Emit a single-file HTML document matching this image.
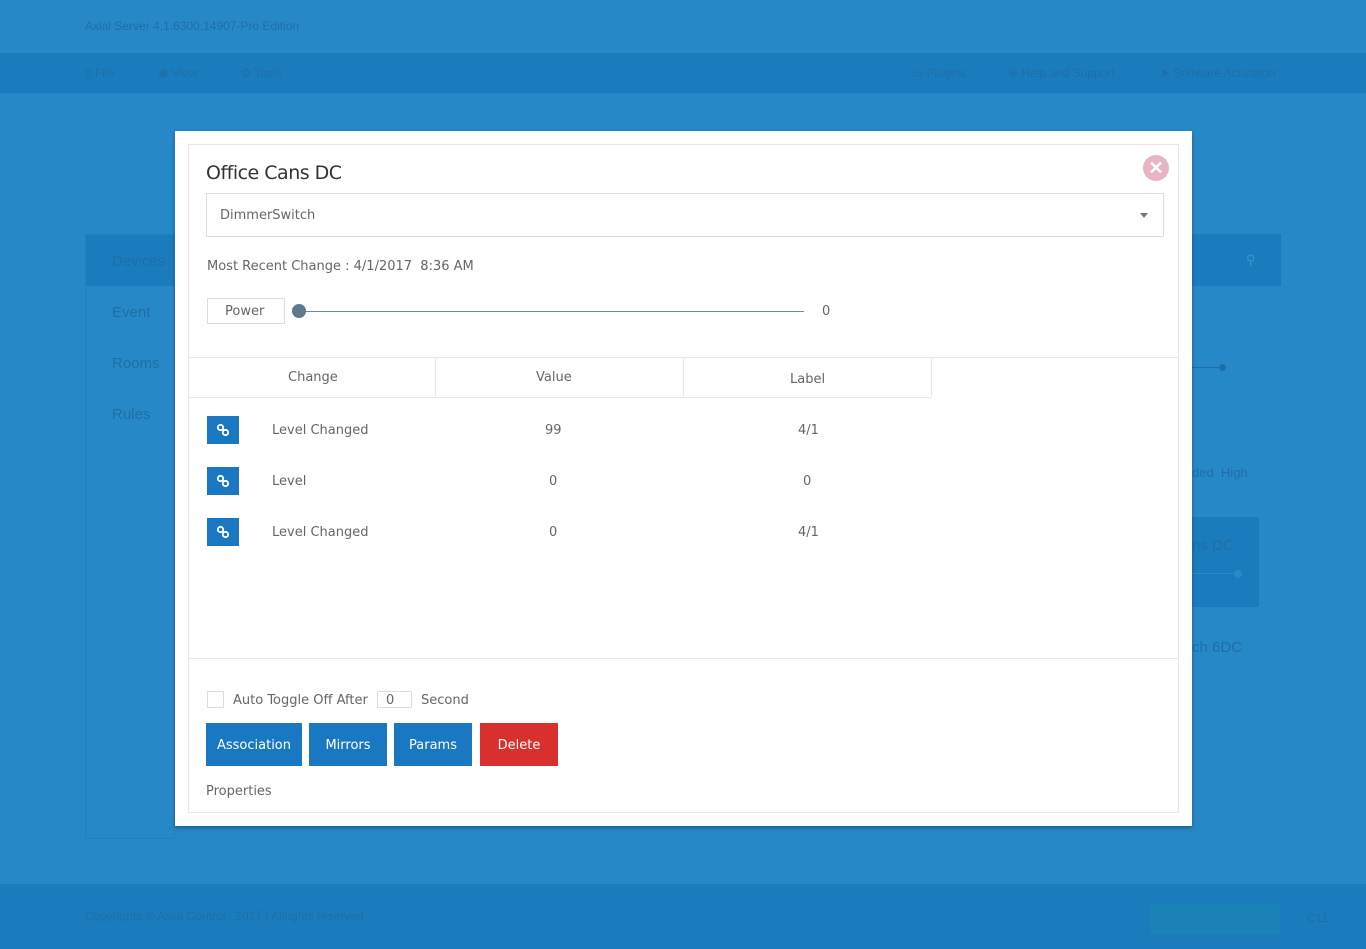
<!DOCTYPE html>
<html><head><meta charset="utf-8"><style>
*{box-sizing:border-box;margin:0;padding:0}
body{width:1366px;height:949px;overflow:hidden;background:#2788c7;font-family:"Liberation Sans",sans-serif;position:relative}
.a{position:absolute}
.dim{color:#1f6fa6;font-size:12px}
.t{color:#666;font-size:13px;font-family:"DejaVu Sans","Liberation Sans",sans-serif}
.btn{position:absolute;top:723px;height:43px;color:#fff;font-size:13px;display:flex;align-items:center;justify-content:center;font-family:"DejaVu Sans",sans-serif;padding-top:2px}
.lnk{position:absolute;left:207px;width:32px;height:28px;background:#1a78c2}
.lnk svg{position:absolute;left:9px;top:7px}
</style></head><body>
<div class="a dim" style="left:85px;top:19px">Axial Server 4.1.6300.14907-Pro Edition</div>
<div class="a" style="left:0;top:53px;width:1366px;height:40px;background:#1a7cbc"></div>
<div class="a dim" style="left:85px;top:66px">▯ File</div>
<div class="a dim" style="left:158px;top:66px">◉ View</div>
<div class="a dim" style="left:240px;top:66px">⚙ Tools</div>
<div class="a dim" style="left:912px;top:66px">▭ Plugins</div>
<div class="a dim" style="left:1008px;top:66px">⊕ Help and Support</div>
<div class="a dim" style="left:1160px;top:66px">➤ Software Activation</div>
<div class="a" style="left:85px;top:234px;width:1196px;height:52px;background:#1a7cbc"></div>
<div class="a" style="left:1246px;top:252px;color:#3a94cc;font-size:13px">⚲</div>
<div class="a" style="left:85px;top:234px;width:90px;height:605px;border:1px solid #2380bf"></div>
<div class="a" style="left:112px;top:253px;color:#1f6fa6;font-size:15px">Devices</div>
<div class="a" style="left:112px;top:304px;color:#1f6fa6;font-size:15px">Event</div>
<div class="a" style="left:112px;top:355px;color:#1f6fa6;font-size:15px">Rooms</div>
<div class="a" style="left:112px;top:406px;color:#1f6fa6;font-size:15px">Rules</div>
<div class="a" style="left:1192px;top:367px;width:30px;height:1px;background:#1f6fa6"></div>
<div class="a" style="left:1219px;top:364px;width:7px;height:7px;border-radius:50%;background:#1f6fa6"></div>
<div class="a" style="left:1192px;top:517px;width:67px;height:90px;background:#1a7cbc"></div>
<div class="a" style="left:1192px;top:573px;width:45px;height:1px;background:#2a8ac8"></div>
<div class="a" style="left:1234px;top:570px;width:8px;height:8px;border-radius:50%;background:#2a8ac8"></div>
<div class="a" style="left:1192px;top:537px;color:#1f6fa6;font-size:15px">ns DC</div>
<div class="a" style="left:1192px;top:639px;color:#1f6fa6;font-size:15px">ch 6DC</div>
<div class="a" style="left:1192px;top:465px;color:#1f6fa6;font-size:13px">ded &nbsp;High</div>
<div class="a" style="left:0;top:884px;width:1366px;height:65px;background:#1a7cbc"></div>
<div class="a dim" style="left:85px;top:909px">Copyrights © Axial Control . 2017 | Allrights reserved</div>
<div class="a" style="left:1150px;top:904px;width:130px;height:30px;background:#1b82b8"></div>
<div class="a dim" style="left:1307px;top:911px">C11</div>

<div class="a" style="left:175px;top:131px;width:1017px;height:695px;background:#fff;box-shadow:0 2px 4px rgba(0,0,0,.3)"></div>
<div class="a" style="left:188px;top:144px;width:991px;height:669px;border:1px solid #e8e8e8"></div>
<div class="a" style="left:206px;top:162px;font-size:19px;color:#333;font-family:'DejaVu Sans',sans-serif;letter-spacing:-.5px">Office Cans DC</div>
<div class="a" style="left:1143px;top:155px;width:26px;height:26px;border-radius:50%;background:#e9b5c3;color:#fff;font-size:18px;font-weight:bold;text-align:center;line-height:26px">✕</div>
<div class="a" style="left:206px;top:193px;width:958px;height:44px;border:1px solid #ddd"></div>
<div class="a t" style="left:220px;top:208px">DimmerSwitch</div>
<div class="a" style="left:1140px;top:213px;border:4px solid transparent;border-top:5px solid #777"></div>
<div class="a t" style="left:207px;top:259px">Most Recent Change : 4/1/2017 &nbsp;8:36 AM</div>
<div class="a" style="left:207px;top:298px;width:78px;height:26px;border:1px solid #ddd"></div>
<div class="a t" style="left:225px;top:304px">Power</div>
<div class="a" style="left:299px;top:311px;width:505px;height:1px;background:#6a8aa0"></div>
<div class="a" style="left:292px;top:304px;width:14px;height:14px;border-radius:50%;background:#5e7a8e"></div>
<div class="a t" style="left:822px;top:304px">0</div>
<div class="a" style="left:188px;top:357px;width:991px;height:1px;background:#e8e8e8"></div>
<div class="a" style="left:188px;top:397px;width:743px;height:1px;background:#e8e8e8"></div>
<div class="a" style="left:435px;top:357px;width:1px;height:40px;background:#e8e8e8"></div>
<div class="a" style="left:683px;top:357px;width:1px;height:40px;background:#e8e8e8"></div>
<div class="a" style="left:931px;top:357px;width:1px;height:40px;background:#e8e8e8"></div>
<div class="a t" style="left:288px;top:370px">Change</div>
<div class="a t" style="left:536px;top:370px">Value</div>
<div class="a t" style="left:790px;top:372px">Label</div>
<div class="lnk" style="top:416px"><svg width="14" height="14" viewBox="0 0 14 14" fill="none" stroke="#fff" stroke-width="1.8"><circle cx="4.5" cy="4.5" r="2.7"/><circle cx="9.5" cy="9.5" r="2.7"/><path d="M6.3 6.3l1.4 1.4"/></svg></div>
<div class="lnk" style="top:467px"><svg width="14" height="14" viewBox="0 0 14 14" fill="none" stroke="#fff" stroke-width="1.8"><circle cx="4.5" cy="4.5" r="2.7"/><circle cx="9.5" cy="9.5" r="2.7"/><path d="M6.3 6.3l1.4 1.4"/></svg></div>
<div class="lnk" style="top:518px"><svg width="14" height="14" viewBox="0 0 14 14" fill="none" stroke="#fff" stroke-width="1.8"><circle cx="4.5" cy="4.5" r="2.7"/><circle cx="9.5" cy="9.5" r="2.7"/><path d="M6.3 6.3l1.4 1.4"/></svg></div>
<div class="a t" style="left:272px;top:423px">Level Changed</div><div class="a t" style="left:545px;top:423px">99</div><div class="a t" style="left:798px;top:423px">4/1</div>
<div class="a t" style="left:272px;top:474px">Level</div><div class="a t" style="left:549px;top:474px">0</div><div class="a t" style="left:803px;top:474px">0</div>
<div class="a t" style="left:272px;top:525px">Level Changed</div><div class="a t" style="left:549px;top:525px">0</div><div class="a t" style="left:798px;top:525px">4/1</div>
<div class="a" style="left:188px;top:658px;width:991px;height:1px;background:#e8e8e8"></div>
<div class="a" style="left:207px;top:691px;width:17px;height:17px;border:1px solid #ddd"></div>
<div class="a t" style="left:233px;top:693px">Auto Toggle Off After</div>
<div class="a" style="left:377px;top:691px;width:35px;height:17px;border:1px solid #ddd"></div>
<div class="a t" style="left:386px;top:693px">0</div>
<div class="a t" style="left:421px;top:693px">Second</div>
<div class="btn" style="left:206px;width:96px;background:#1a78c2">Association</div>
<div class="btn" style="left:309px;width:78px;background:#1a78c2">Mirrors</div>
<div class="btn" style="left:394px;width:78px;background:#1a78c2">Params</div>
<div class="btn" style="left:480px;width:78px;background:#d9302e">Delete</div>
<div class="a t" style="left:206px;top:784px">Properties</div>
</body></html>
